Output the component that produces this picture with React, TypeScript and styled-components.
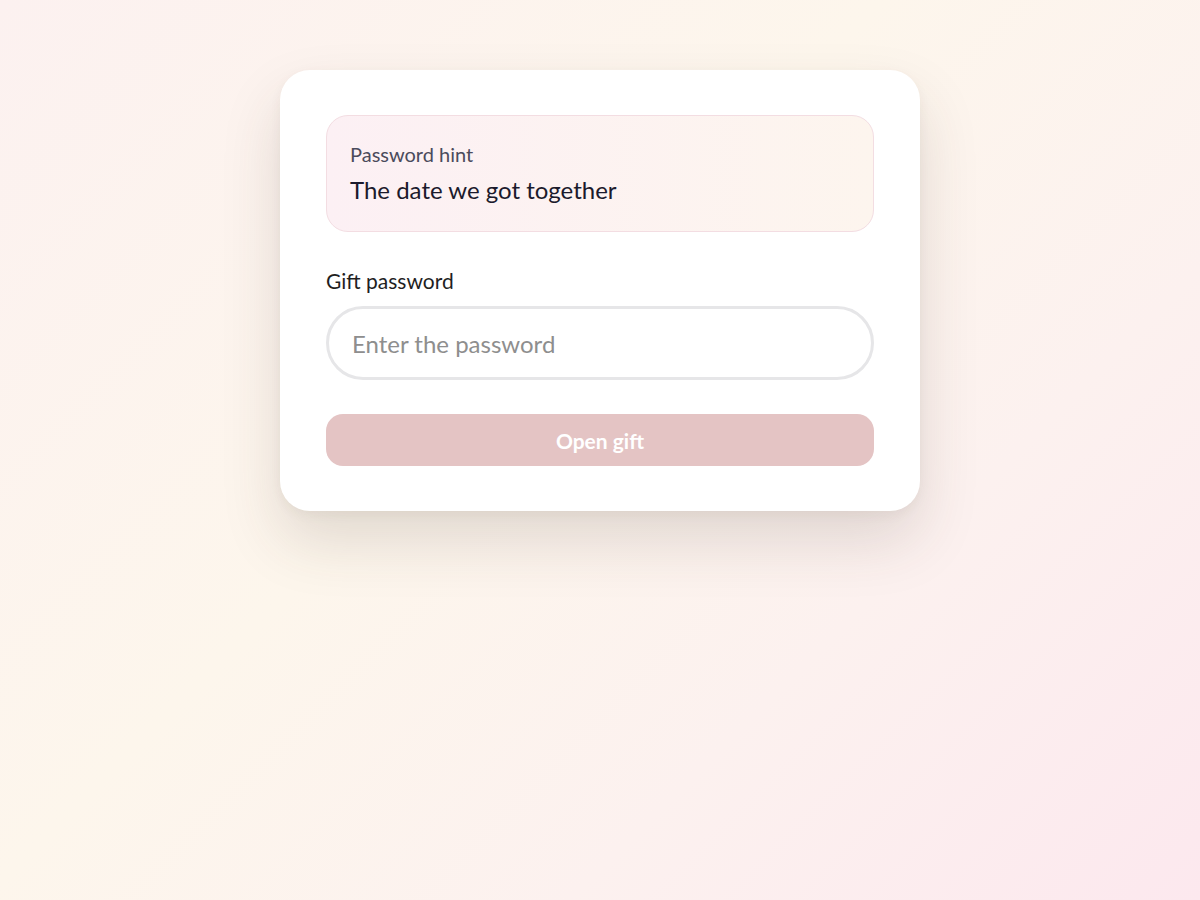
import { styled, createGlobalStyle } from 'styled-components';

const GlobalStyle = createGlobalStyle`
  html, body {
    margin: 0;
    padding: 0;
    height: 100%;
  }
  body {
    font-family: Lato, 'Noto Sans', sans-serif;
    background: linear-gradient(135deg, #fcf1f0 0%, #fdf6ec 42%, #fcf1ef 70%, #fce8ee 100%);
    min-height: 100vh;
  }
`;

export default function App() {
  return (
    <>
      <GlobalStyle />
      <S.Page>
        <S.Card>
          <S.Hint>
            <S.HintLabel>Password hint</S.HintLabel>
            <S.HintText>The date we got together</S.HintText>
          </S.Hint>
          <S.FieldLabel htmlFor="gift-password">Gift password</S.FieldLabel>
          <S.Input
            id="gift-password"
            type="password"
            placeholder="Enter the password"
          />
          <S.OpenButton disabled>Open gift</S.OpenButton>
        </S.Card>
      </S.Page>
    </>
  );
}

const S = {
  Page: styled.main`
    min-height: 100vh;
    display: flex;
    justify-content: center;
    align-items: flex-start;
    padding-top: 70px;
    box-sizing: border-box;
  `,
  Card: styled.section`
    width: 640px;
    box-sizing: border-box;
    padding: 45px 46px;
    background: #ffffff;
    border-radius: 30px;
    box-shadow: 0 30px 60px rgba(70, 55, 45, 0.15), 0 4px 12px rgba(70, 55, 45, 0.05);
    display: flex;
    flex-direction: column;
  `,
  Hint: styled.div`
    padding: 25px 23px 26px;
    border: 1px solid #f3dde2;
    border-radius: 22px;
    background: linear-gradient(90deg, #fcf0f4 0%, #fdf5ee 100%);
  `,
  HintLabel: styled.p`
    margin: 0;
    font-size: 20px;
    line-height: 26px;
    color: #4b4b5c;
  `,
  HintText: styled.p`
    margin: 8px 0 0;
    font-size: 24px;
    line-height: 30px;
    color: #1b1a2c;
  `,
  FieldLabel: styled.label`
    margin-top: 35px;
    font-size: 21px;
    line-height: 28px;
    color: #1f1f1f;
  `,
  Input: styled.input`
    margin-top: 11px;
    height: 74px;
    box-sizing: border-box;
    border: 3px solid #e6e6e8;
    border-radius: 37px;
    padding: 0 23px;
    font-family: inherit;
    font-size: 24px;
    color: #222;
    outline: none;
    &::placeholder {
      color: #8e8e8e;
    }
  `,
  OpenButton: styled.button`
    margin-top: 34px;
    height: 52px;
    border: none;
    border-radius: 17px;
    background: #e4c4c4;
    color: #fff;
    font-family: inherit;
    font-size: 21px;
    font-weight: 700;
    cursor: not-allowed;
  `,
};
